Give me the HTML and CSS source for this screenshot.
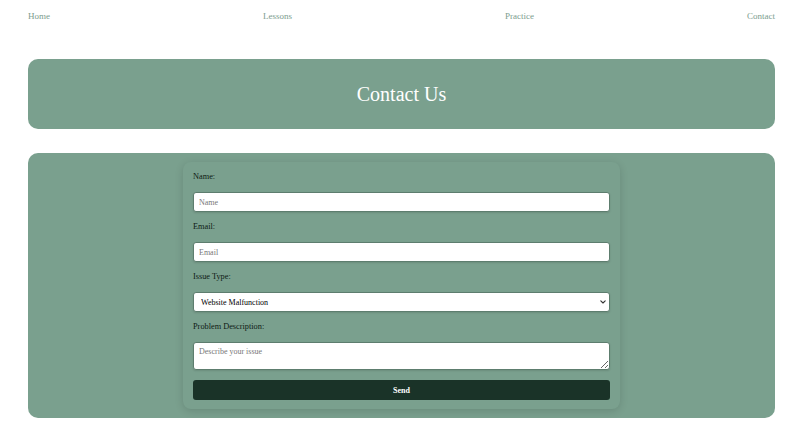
FILE: index.html
```html
<!DOCTYPE html>
<html lang="en">
<head>
<meta charset="utf-8">
<title>Contact Us</title>
<link rel="stylesheet" href="styles.css">
</head>
<body>
<div class="page">
  <nav class="nav">
    <a href="#">Home</a>
    <a href="#">Lessons</a>
    <a href="#">Practice</a>
    <a href="#">Contact</a>
  </nav>
  <header class="hero">
    <h1>Contact Us</h1>
  </header>
  <section class="panel">
    <form class="card">
      <label for="name">Name:</label>
      <input id="name" type="text" placeholder="Name">
      <label for="email">Email:</label>
      <input id="email" type="email" placeholder="Email">
      <label for="issue">Issue Type:</label>
      <div class="select-wrap">
        <select id="issue">
          <option>Website Malfunction</option>
          <option>Lesson Content</option>
          <option>Other</option>
        </select>
        <svg class="chev" width="6" height="4" viewBox="0 0 6 4" aria-hidden="true">
          <path d="M0.8 0.8 L3 3 L5.2 0.8" fill="none" stroke="#333" stroke-width="1.1" stroke-linecap="round" stroke-linejoin="round"/>
        </svg>
      </div>
      <label for="desc">Problem Description:</label>
      <textarea id="desc" placeholder="Describe your issue"></textarea>
      <button type="button">Send</button>
    </form>
  </section>
</div>
</body>
</html>
```
FILE: styles.css
```css
* { box-sizing: border-box; }
body {
  margin: 0;
  background: #ffffff;
  font-family: "Liberation Serif", "Times New Roman", serif;
}
.page {
  padding: 0 31px 0 28px;
}
.nav {
  display: flex;
  justify-content: space-between;
  padding-top: 10px;
  line-height: 12px;
  font-size: 9px;
}
.nav a {
  color: #7c9d8e;
  text-decoration: none;
}
.hero {
  margin-top: 37px;
  height: 70px;
  background: #7aa08e;
  border-radius: 10px;
  display: flex;
  align-items: center;
  justify-content: center;
}
.hero h1 {
  margin: 0;
  color: #ffffff;
  font-weight: normal;
  font-size: 20px;
  line-height: 24px;
}
.panel {
  margin-top: 24px;
  background: #7aa08e;
  border-radius: 10px;
  padding: 9px 0;
  display: flex;
  justify-content: center;
}
.card {
  width: 437px;
  padding: 10px 10px 9px;
  background: #7aa08e;
  border-radius: 8px;
  box-shadow: 0 2px 8px rgba(0, 0, 0, 0.14);
  display: flex;
  flex-direction: column;
}
.card label {
  display: block;
  font-size: 8.3px;
  line-height: 10px;
  color: #0e1a14;
  margin-bottom: 10px;
}
.card input,
.card select,
.card textarea {
  width: 100%;
  height: 20px;
  margin: 0 0 10px;
  border: 1px solid #5d7d6e;
  border-radius: 3px;
  background: #ffffff;
  font-family: "Liberation Serif", "Times New Roman", serif;
  font-size: 8px;
  color: #111;
  box-shadow: 0 1px 2px rgba(0, 0, 0, 0.12);
}
.card input {
  padding: 0 5px;
}
.card input::placeholder,
.card textarea::placeholder {
  color: #777;
}
.select-wrap {
  position: relative;
}
.card select {
  appearance: none;
  -webkit-appearance: none;
  padding: 0 14px 0 7px;
  color: #000;
  display: block;
}
.chev {
  position: absolute;
  right: 4px;
  top: 8px;
  pointer-events: none;
}
.card textarea {
  height: 28px;
  padding: 4px 5px;
  resize: vertical;
  display: block;
}
.card button {
  height: 20px;
  border: none;
  border-radius: 3px;
  background: #1a3328;
  color: #ffffff;
  font-family: "Liberation Serif", "Times New Roman", serif;
  font-size: 8px;
  font-weight: bold;
  cursor: pointer;
}
```
